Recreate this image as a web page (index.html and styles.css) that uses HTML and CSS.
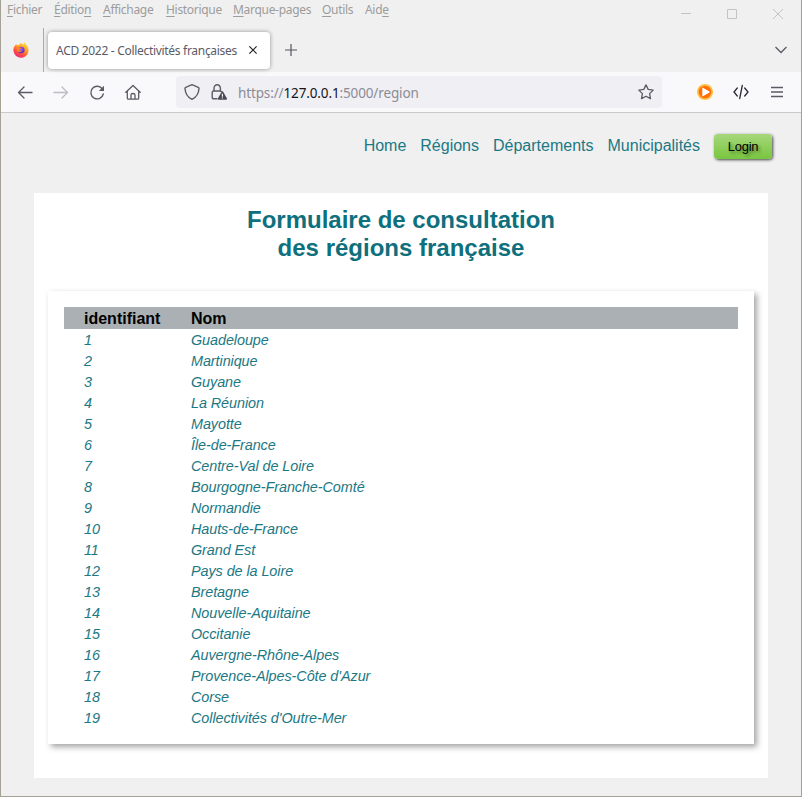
FILE: index.html
```html
<!DOCTYPE html>
<html lang="fr">
<head>
<meta charset="utf-8">
<title>ACD 2022 - Collectivités françaises</title>
<link rel="stylesheet" href="styles.css">
</head>
<body>
<div class="window">
  <header class="titlebar">
    <nav class="menus">
      <span class="m1"><u>F</u>ichier</span><span class="m2"><u>É</u>ditio<u>n</u></span><span class="m3"><u>A</u>ffichage</span><span class="m4"><u>H</u>istorique</span><span class="m5"><u>M</u>arque-pages</span><span class="m6"><u>O</u>utils</span><span class="m7">Aid<u>e</u></span>
    </nav>
    <svg class="controls" width="104" height="12" viewBox="0 0 104 12" fill="none" stroke="#c3c3c3">
      <path d="M0 5.500h10M46.500 1.500h9v9h-9zM92 1l10 10M102 1L92 11"/>
    </svg>
  </header>
  <div class="tabbar">
    <div class="pinned">
      <svg width="16" height="16" viewBox="0 0 17 17">
        <defs>
          <linearGradient id="fire" x1=".8" y1="0" x2=".2" y2="1"><stop offset="0" stop-color="#ffe93b"/><stop offset=".4" stop-color="#ff9b22"/><stop offset=".7" stop-color="#ff4a42"/><stop offset="1" stop-color="#e82290"/></linearGradient>
          <radialGradient id="globe" cx=".5" cy=".3"><stop offset="0" stop-color="#a45cf0"/><stop offset="1" stop-color="#5a37cc"/></radialGradient>
        </defs>
        <path d="M3.500 2l.7 2c.5-.4 1.200-.7 1.900-.7C6.800 2 8 1.200 9 1.200c1 .7 1.600 1.200 2.100 2 .1-1.100.2-2.100.7-3 1 1.300 2.200 2.200 3.100 3.700C17 7 16.800 9.600 15.800 12A8 8 0 0 1 1 11.500C0 9 .4 6 1.600 4.500z" fill="url(#fire)"/>
        <circle cx="8.800" cy="8.500" r="3.500" fill="url(#globe)"/>
        <path d="M3.500 5.500c1.300-.8 2.300-.4 3.400.3 1 .3 2 .2 2.200.7 0 .7-2 .8-2.200 1.700 0 1 1.600 1.200 2.900.6C9 11 6.500 11 4.500 9.500z" fill="#ff8a25"/>
      </svg>
    </div>
    <div class="tab">
      <span class="tab-title">ACD 2022 - Collectivités françaises</span>
      <svg width="8" height="8" viewBox="0 0 8 8" fill="none" stroke="#222" stroke-width="1.200"><path d="M.4.4l7.200 7.200M7.600.4L.4 7.600"/></svg>
    </div>
    <svg class="plus" width="12" height="12" viewBox="0 0 12 12" fill="none" stroke="#55555d" stroke-width="1.200"><path d="M0 6h12M6 0v12"/></svg>
    <svg class="chevron" width="12" height="8" viewBox="0 0 12 8" fill="none" stroke="#5b5b66" stroke-width="1.300"><path d="M.5 1L6 6.500 11.500 1"/></svg>
  </div>
  <div class="toolbar">
    <div class="navicons">
      <svg width="16" height="16" viewBox="0 0 16 16" fill="none" stroke="#5b5b66" stroke-width="1.300" stroke-linecap="round" stroke-linejoin="round"><path d="M15 8.500H1.500M7 3L1.500 8.500 7 14"/></svg>
      <svg width="16" height="16" viewBox="0 0 16 16" fill="none" stroke="#bdbdc2" stroke-width="1.300" stroke-linecap="round" stroke-linejoin="round"><path d="M1 8.500h13.500M9 3l5.500 5.500L9 14"/></svg>
      <svg width="16" height="16" viewBox="0 0 16 16" fill="none" stroke="#5b5b66" stroke-width="1.400" stroke-linecap="round"><path d="M13.500 5.200A6.300 6.300 0 1 0 14.300 10"/><path d="M15 1.800v5.200H9.800z" fill="#5b5b66" stroke="none"/></svg>
      <svg width="16" height="16" viewBox="0 0 16 16" fill="none" stroke="#5b5b66" stroke-width="1.300" stroke-linecap="round" stroke-linejoin="round"><path d="M.8 8.300L8 1.500l7.200 6.800M2.300 7.200V14q0 1.200 1.200 1.200h9q1.200 0 1.200-1.200V7.200M6 15v-4q0-1.500 2-1.500t2 1.500v4"/></svg>
    </div>
    <div class="urlbar">
      <svg class="shield" width="16" height="16" viewBox="0 0 16 16" fill="none" stroke="#5b5b66" stroke-width="1.400" stroke-linejoin="round"><path d="M8 .7l6.300 2.600q.8.300.7 1.200C14.700 9.500 12 13.500 8 15.300 4 13.500 1.300 9.500 1 4.500q-.1-.9.700-1.200z"/></svg>
      <svg class="lock" width="16" height="16" viewBox="0 0 16 16"><g fill="none" stroke="#5b5b66" stroke-width="1.400"><path d="M3 7V4.500a3.200 3.800 0 0 1 6.400 0V7"/><path d="M6.500 14.800H2.700Q1.200 14.800 1.200 13.300V8.500Q1.200 7 2.700 7H9q1.300 0 1.500 1"/></g><path d="M10.800 7.600q.6-.8 1.200 0l4 7q.3 1-.7 1.200H7.500q-1-.2-.7-1.200z" fill="#4b4b55"/><path d="M11.400 9.800v3M11.400 13.600v1" stroke="#fff" stroke-width="1.100"/></svg>
      <span class="url">https://<b>127.0.0.1</b>:5000/region</span>
      <svg class="star" width="16" height="16" viewBox="0 0 16 16" fill="none" stroke="#5b5b66" stroke-width="1.300" stroke-linejoin="round"><path d="M8 .9l2.200 4.500 5 .7-3.600 3.500.9 5L8 12.200l-4.500 2.400.9-5L.8 6.100l5-.7z"/></svg>
    </div>
    <div class="actions">
      <svg width="16" height="16" viewBox="0 0 16 16"><circle cx="8" cy="8" r="8" fill="#ffc043"/><circle cx="8" cy="8" r="6.300" fill="#ff6f0a"/><path d="M5.300 4q0-.6.600-.3l6.500 3.900q.5.400 0 .8l-6.500 3.900q-.6.300-.6-.3z" fill="#fff"/></svg>
      <svg width="16" height="16" viewBox="0 0 16 16" fill="none" stroke="#2b2b33" stroke-width="1.300" stroke-linecap="round"><path d="M4.300 4L1 8l3.300 4M11.700 4L15 8l-3.300 4M9.300 1.500l-2.600 13"/></svg>
      <svg width="12" height="16" viewBox="0 0 12 16" fill="none" stroke="#5b5b66" stroke-width="1.300"><path d="M0 3.500h12M0 8h12M0 12.500h12"/></svg>
    </div>
  </div>
  <div class="page">
    <nav class="sitenav">
      <a>Home</a><a>Régions</a><a>Départements</a><a>Municipalités</a><button class="login">Login</button>
    </nav>
    <main class="panel">
      <h1>Formulaire de consultation<br>des régions française</h1>
      <section class="card">
        <table>
          <thead><tr><th class="id">identifiant</th><th>Nom</th></tr></thead>
          <tbody>
            <tr><td>1</td><td>Guadeloupe</td></tr>
            <tr><td>2</td><td>Martinique</td></tr>
            <tr><td>3</td><td>Guyane</td></tr>
            <tr><td>4</td><td>La Réunion</td></tr>
            <tr><td>5</td><td>Mayotte</td></tr>
            <tr><td>6</td><td>Île-de-France</td></tr>
            <tr><td>7</td><td>Centre-Val de Loire</td></tr>
            <tr><td>8</td><td>Bourgogne-Franche-Comté</td></tr>
            <tr><td>9</td><td>Normandie</td></tr>
            <tr><td>10</td><td>Hauts-de-France</td></tr>
            <tr><td>11</td><td>Grand Est</td></tr>
            <tr><td>12</td><td>Pays de la Loire</td></tr>
            <tr><td>13</td><td>Bretagne</td></tr>
            <tr><td>14</td><td>Nouvelle-Aquitaine</td></tr>
            <tr><td>15</td><td>Occitanie</td></tr>
            <tr><td>16</td><td>Auvergne-Rhône-Alpes</td></tr>
            <tr><td>17</td><td>Provence-Alpes-Côte d'Azur</td></tr>
            <tr><td>18</td><td>Corse</td></tr>
            <tr><td>19</td><td>Collectivités d'Outre-Mer</td></tr>
          </tbody>
        </table>
      </section>
    </main>
  </div>
</div>
</body>
</html>
```

FILE: styles.css
```css
* { box-sizing: border-box; }
body { margin: 0; background: #efefef; font-family: "Liberation Sans", Arial, sans-serif; }
svg { display: block; flex: none; overflow: visible; }
.window {
  width: 802px; height: 797px; overflow: hidden;
  border: 1px solid #a5a295; border-top: 0;
  background: #f0f0f0;
}
.titlebar { height: 28px; display: flex; justify-content: space-between; font: 12px/16px "Noto Sans", sans-serif; color: #9c9c9c; }
.menus { display: flex; padding: 2px 0 0 6px; white-space: nowrap; letter-spacing: -0.3px; }
.menus u { text-underline-offset: 2px; text-decoration-thickness: 1px; }
.m1 { width: 47px; }
.m2 { width: 49px; }
.m3 { width: 63px; }
.m4 { width: 67px; }
.m5 { width: 89px; }
.m6 { width: 43px; }
.controls { margin: 8px 16px 0 0; }
.tabbar { height: 44px; display: flex; align-items: center; }
.pinned { width: 43px; height: 44px; padding: 14px 0 0 12px; border-right: 1px solid #aaa; }
.tab {
  width: 222px; height: 37px; margin-left: 3.500px; padding: 0 12.500px 0 8.500px;
  display: flex; align-items: center; justify-content: space-between;
  background: #fff; border-radius: 4px; box-shadow: 0 0 4px rgba(0, 0, 0, .4);
}
.tab-title { padding-top: 1px; font: 12px/16px "Noto Sans", sans-serif; letter-spacing: -0.3px; color: #5b5b66; white-space: nowrap; }
.plus { margin-left: 15px; }
.chevron { margin: 0 14px 0 auto; }
.toolbar { height: 41px; display: flex; align-items: center; background: #f9f9fb; border-bottom: 1px solid #c9c9cc; }
.navicons { display: flex; gap: 20px; padding-left: 16px; }
.urlbar { width: 486px; height: 32px; margin-left: 35px; padding: 0 8px; display: flex; align-items: center; background: #f0eff4; border-radius: 4px; }
.lock { margin-left: 11px; }
.url { margin-left: 11px; padding-top: 2px; font: 13.5px/20px "Noto Sans", sans-serif; letter-spacing: -0.130px; color: #8c8c94; white-space: nowrap; }
.url b { font-weight: 400; color: #15141a; }
.star { margin-left: auto; }
.actions { display: flex; gap: 20px; align-items: center; margin-left: 35px; }
.actions svg:last-child { margin-left: 2px; }
.page { padding: 20px 33px 0; }
.sitenav { height: 60px; margin-right: -4px; display: flex; justify-content: flex-end; align-items: flex-start; gap: 14px; font-size: 16px; line-height: 26px; color: #1b7884; }
.login {
  width: 58px; height: 25px; margin-top: 1px; padding: 0; border: 0; border-radius: 4px;
  font: 13px "Liberation Sans", Arial, sans-serif; letter-spacing: -0.3px; color: #000;
  background: linear-gradient(#a7d77b, #78c63f);
  box-shadow: 1px 1px 3px #444; text-shadow: 2px 2px 3px rgba(0, 0, 0, .4);
}
.panel { height: 585px; padding: 13px 14px 0; background: #fff; }
h1 { margin: 0 0 29px; font-size: 24px; line-height: 28px; text-align: center; color: #0e6f7d; }
.card { width: 706px; height: 453px; padding: 16px; background: #fff; box-shadow: 3px 3px 6px rgba(0, 0, 0, .36); }
table { width: 674px; border-collapse: collapse; table-layout: fixed; }
th { height: 22px; padding: 2px 0 0; text-align: left; font-size: 16px; line-height: 20px; background: #abb0b4; }
.id { width: 127px; }
th:first-child, td:first-child { padding-left: 20px; }
td { height: 21px; padding: 1px 0 0; font-size: 14.4px; line-height: 20px; font-style: italic; letter-spacing: -0.070px; color: #1b7884; }
```
